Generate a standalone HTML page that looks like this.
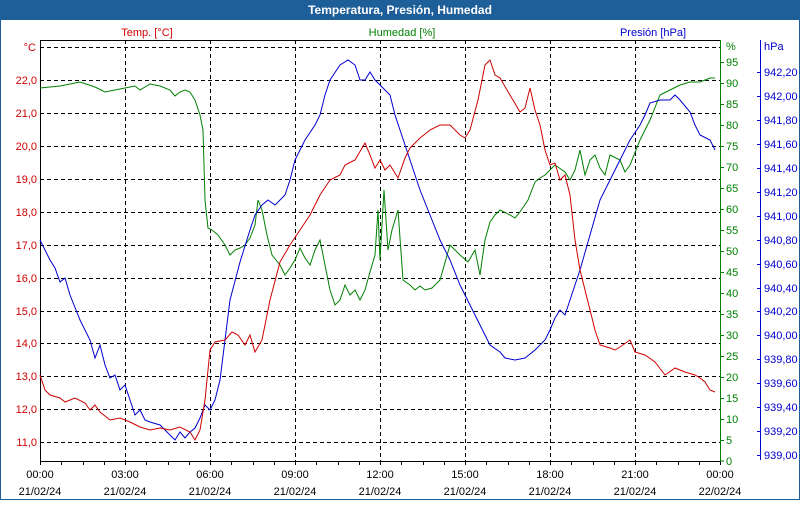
<!DOCTYPE html>
<html><head><meta charset="utf-8"><style>
body{margin:0;width:800px;height:500px;overflow:hidden;background:#fff;font-family:"Liberation Sans",sans-serif}
</style></head><body>
<svg width="800" height="500" xmlns="http://www.w3.org/2000/svg" font-family="Liberation Sans, sans-serif" font-size="11">
<rect x="0" y="0" width="800" height="500" fill="#1f5f99"/>
<rect x="1" y="20" width="798" height="479" fill="#fff"/>
<text x="400" y="14" fill="#fff" font-weight="bold" font-size="12" text-anchor="middle">Temperatura, Presión, Humedad</text>
<text x="147" y="36" fill="#d00000" text-anchor="middle">Temp. [°C]</text>
<text x="402" y="36" fill="#008000" text-anchor="middle">Humedad [%]</text>
<text x="653" y="36" fill="#0000d0" text-anchor="middle">Presión [hPa]</text>
<g stroke="#000" stroke-dasharray="4,3" stroke-width="1">
<path d="M125.5 40V461M210.5 40V461M295.5 40V461M380.5 40V461M465.5 40V461M550.5 40V461M635.5 40V461"/>
<path d="M40 47.5H720M40 80.5H720M40 113.5H720M40 146.5H720M40 179.5H720M40 212.5H720M40 245.5H720M40 278.5H720M40 311.5H720M40 343.5H720M40 376.5H720M40 409.5H720M40 442.5H720"/>
</g>
<path d="M40.5 40V461.5H720M40 40.5H720" stroke="#000" fill="none"/>
<g stroke="#000"><path d="M40.5 461v4M61.5 461v4M83.5 461v4M104.5 461v4M125.5 461v4M146.5 461v4M168.5 461v4M189.5 461v4M210.5 461v4M231.5 461v4M253.5 461v4M274.5 461v4M295.5 461v4M316.5 461v4M338.5 461v4M359.5 461v4M380.5 461v4M401.5 461v4M423.5 461v4M444.5 461v4M465.5 461v4M486.5 461v4M508.5 461v4M529.5 461v4M550.5 461v4M571.5 461v4M593.5 461v4M614.5 461v4M635.5 461v4M656.5 461v4M678.5 461v4M699.5 461v4M720.5 461v4"/></g>
<g fill="#d00000" text-anchor="end">
<text x="36" y="51">°C</text><text x="37" y="84">22,0</text><text x="37" y="117">21,0</text><text x="37" y="150">20,0</text><text x="37" y="183">19,0</text><text x="37" y="216">18,0</text><text x="37" y="249">17,0</text><text x="37" y="282">16,0</text><text x="37" y="315">15,0</text><text x="37" y="347">14,0</text><text x="37" y="380">13,0</text><text x="37" y="413">12,0</text><text x="37" y="446">11,0</text>
</g>
<path d="M720.5 40V461" stroke="#008000"/>
<g stroke="#008000"><path d="M720 62.5h4M720 83.5h4M720 104.5h4M720 125.5h4M720 146.5h4M720 167.5h4M720 188.5h4M720 209.5h4M720 230.5h4M720 251.5h4M720 272.5h4M720 293.5h4M720 314.5h4M720 335.5h4M720 356.5h4M720 377.5h4M720 398.5h4M720 419.5h4M720 440.5h4M720 461h4"/></g>
<g fill="#008000">
<text x="726" y="50">%</text><text x="726" y="66">95</text><text x="726" y="87">90</text><text x="726" y="108">85</text><text x="726" y="129">80</text><text x="726" y="150">75</text><text x="726" y="171">70</text><text x="726" y="192">65</text><text x="726" y="213">60</text><text x="726" y="234">55</text><text x="726" y="255">50</text><text x="726" y="276">45</text><text x="726" y="297">40</text><text x="726" y="318">35</text><text x="726" y="339">30</text><text x="726" y="360">25</text><text x="726" y="381">20</text><text x="726" y="402">15</text><text x="726" y="423">10</text><text x="726" y="444">5</text><text x="726" y="465">0</text>
</g>
<path d="M760.5 40V460" stroke="#0000d0"/>
<g stroke="#0000d0"><path d="M757 72.5h3M757 96.5h3M757 120.5h3M757 144.5h3M757 168.5h3M757 192.5h3M757 216.5h3M757 240.5h3M757 264.5h3M757 288.5h3M757 311.5h3M757 335.5h3M757 359.5h3M757 383.5h3M757 407.5h3M757 431.5h3M757 455.5h3"/></g>
<g fill="#0000d0">
<text x="764" y="50">hPa</text><text x="764" y="76">942,20</text><text x="764" y="100">942,00</text><text x="764" y="124">941,80</text><text x="764" y="148">941,60</text><text x="764" y="172">941,40</text><text x="764" y="196">941,20</text><text x="764" y="220">941,00</text><text x="764" y="244">940,80</text><text x="764" y="268">940,60</text><text x="764" y="292">940,40</text><text x="764" y="315">940,20</text><text x="764" y="339">940,00</text><text x="764" y="363">939,80</text><text x="764" y="387">939,60</text><text x="764" y="411">939,40</text><text x="764" y="435">939,20</text><text x="764" y="459">939,00</text>
</g>
<g fill="#000" text-anchor="middle">
<text x="40" y="478">00:00</text><text x="125" y="478">03:00</text><text x="210" y="478">06:00</text><text x="295" y="478">09:00</text><text x="380" y="478">12:00</text><text x="465" y="478">15:00</text><text x="550" y="478">18:00</text><text x="635" y="478">21:00</text><text x="720" y="478">00:00</text>
<text x="40" y="495">21/02/24</text><text x="125" y="495">21/02/24</text><text x="210" y="495">21/02/24</text><text x="295" y="495">21/02/24</text><text x="380" y="495">21/02/24</text><text x="465" y="495">21/02/24</text><text x="550" y="495">21/02/24</text><text x="635" y="495">21/02/24</text><text x="720" y="495">22/02/24</text>
</g>
<g fill="none" stroke-width="1">
<polyline stroke="#008000" points="40,88 60,86 70,84 80,82 95,87 105,92 115,90 125,88 135,86 140,90 150,84 160,86 170,90 175,96 180,92 185,90 190,92 195,100 200,115 203,130 205,200 208,228 212,230 218,235 225,245 230,255 235,250 240,248 245,245 250,238 255,225 258,200 262,210 267,235 272,255 280,265 285,275 290,268 295,260 300,248 305,258 310,265 315,250 320,240 325,265 330,290 335,305 340,300 345,285 350,295 355,290 360,300 365,290 370,272 375,255 378,210 380,260 384,190 388,250 392,230 398,210 403,280 410,285 415,290 420,286 425,290 432,288 440,280 450,245 455,250 460,255 468,262 475,250 480,275 485,240 490,222 495,215 500,210 510,215 515,218 520,212 528,200 535,182 540,178 545,175 555,165 565,172 570,180 575,170 580,150 585,175 590,160 595,155 600,168 605,175 610,155 620,160 625,172 630,165 640,140 650,120 660,95 670,90 680,85 690,82 700,82 710,78 715,78"/>
<polyline stroke="#0000d0" points="40,240 45,250 50,260 55,268 60,282 65,278 70,295 80,320 90,340 95,358 100,345 105,365 110,378 115,375 120,390 125,385 130,400 135,415 140,410 145,420 150,422 160,425 170,435 175,440 180,432 185,438 190,432 195,428 200,418 205,405 210,410 215,400 220,380 225,340 230,300 240,262 250,230 255,215 262,205 268,200 275,205 285,195 290,180 295,160 305,140 315,125 320,115 325,95 330,80 340,65 348,60 355,65 360,80 365,80 370,72 375,80 380,85 390,95 395,115 400,130 405,145 410,160 420,190 430,215 440,240 450,260 460,285 470,305 480,325 490,345 500,352 505,358 515,360 525,358 535,350 545,340 550,330 555,318 560,310 565,315 570,300 580,270 590,235 600,200 610,180 620,160 630,140 640,125 645,115 650,103 660,100 670,100 675,95 680,100 690,112 695,125 700,135 710,140 715,150"/>
<polyline stroke="#d00000" points="40,375 45,390 50,395 60,398 65,402 75,398 85,403 90,410 95,405 100,412 110,420 120,418 130,422 140,427 150,430 160,428 170,430 180,427 190,432 195,440 200,430 205,400 210,350 215,342 225,340 232,332 238,335 245,345 250,335 255,352 262,340 270,300 280,262 290,245 300,230 310,215 320,195 330,180 340,175 345,165 355,160 365,143 370,155 375,168 380,160 385,170 390,165 398,178 405,158 410,148 420,138 430,130 440,125 450,125 460,135 465,138 470,130 478,100 485,65 490,60 495,75 500,78 510,95 520,112 525,108 530,88 535,110 540,125 545,150 550,165 555,163 560,180 565,175 570,195 575,240 580,270 585,290 590,310 595,330 600,345 610,348 615,350 620,347 630,340 635,352 645,355 655,362 665,375 675,368 685,372 695,375 700,378 705,382 710,390 715,392"/>
</g>
</svg>
</body></html>
